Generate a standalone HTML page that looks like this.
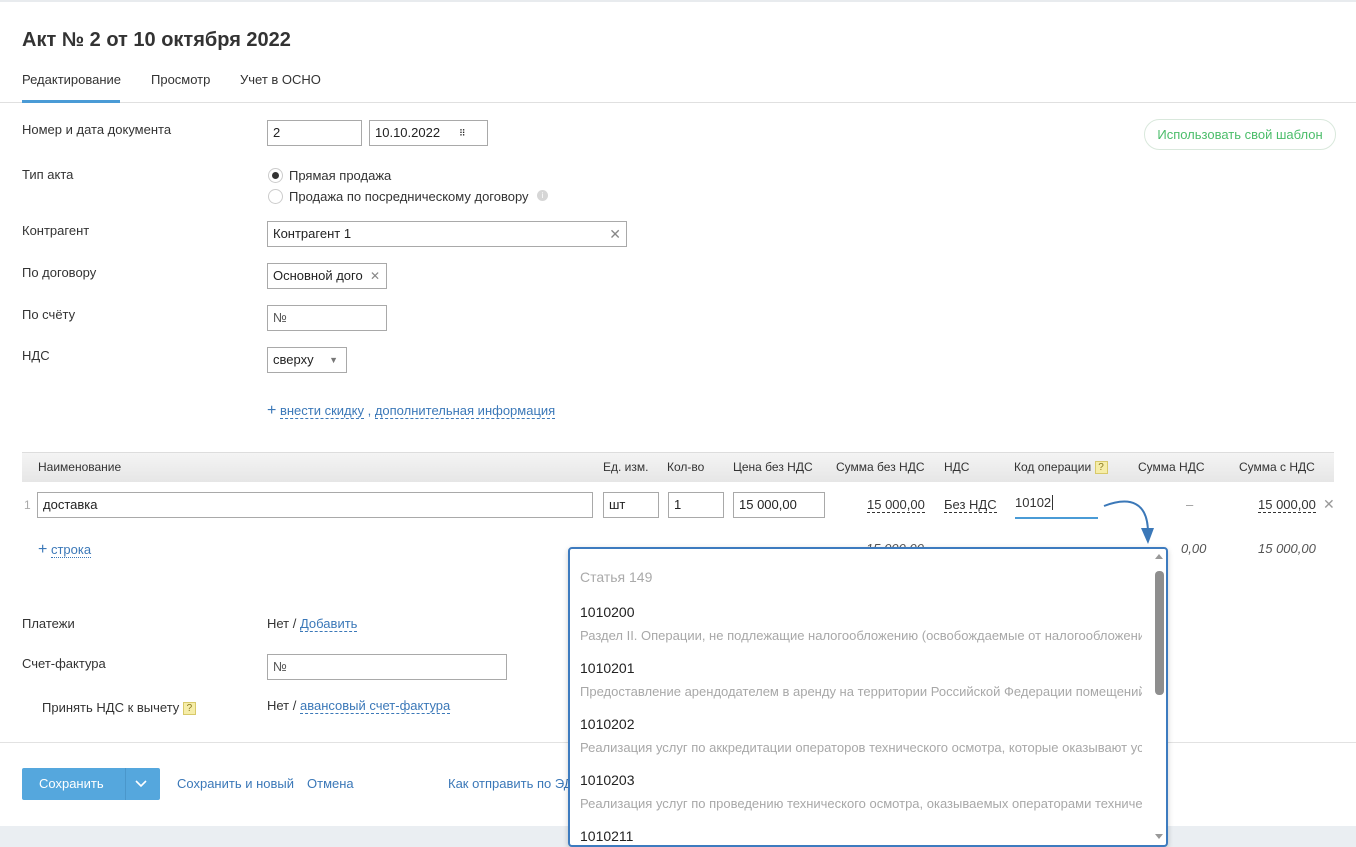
<!DOCTYPE html>
<html><head><meta charset="utf-8">
<style>
*{box-sizing:border-box;margin:0;padding:0}
body{width:1356px;height:847px;position:relative;overflow:hidden;background:#fff;font-family:"Liberation Sans",sans-serif;font-size:13px;color:#333}
.a{position:absolute;white-space:nowrap}
.inp{position:absolute;border:1px solid #a9a9a9;background:#fff;height:26px;padding:0 5px;line-height:24px;font-size:13px;color:#222;white-space:nowrap;overflow:hidden}
.lnk{color:#3b78b8;border-bottom:1px dashed #3b78b8}
.dash{border-bottom:1px dashed #333}
.th{position:absolute;top:460px;font-size:12px;color:#333;white-space:nowrap}
.q{display:inline-block;width:13px;height:13px;background:#f6eda8;border:1px solid #d8c96a;font-size:10px;line-height:11px;text-align:center;color:#8a7a20;vertical-align:1px}
.dd .n{position:absolute;left:10px;font-size:14px;color:#222}
.dd .d{position:absolute;left:10px;font-size:13px;color:#a8a8a8;white-space:nowrap;width:562px;overflow:hidden}
</style></head><body>
<div class="a" style="left:0;top:0;width:1356px;height:2px;background:#e8ebee"></div>
<div class="a" style="left:22px;top:29px;font-size:20px;font-weight:bold;color:#333">Акт № 2 от 10 октября 2022</div>
<div class="a" style="left:22px;top:72px;color:#333">Редактирование</div>
<div class="a" style="left:151px;top:72px;color:#333">Просмотр</div>
<div class="a" style="left:240px;top:72px;color:#333">Учет в ОСНО</div>
<div class="a" style="left:0;top:102px;width:1356px;height:1px;background:#e0e0e0"></div>
<div class="a" style="left:22px;top:100px;width:98px;height:3px;background:#4a9bd6"></div>

<div class="a" style="left:22px;top:122px">Номер и дата документа</div>
<div class="inp" style="left:267px;top:120px;width:95px">2</div>
<div class="inp" style="left:369px;top:120px;width:119px">10.10.2022<span style="position:absolute;left:89px;top:0;font-size:9px;letter-spacing:-1px">⠿</span></div>
<div class="a" style="left:1144px;top:119px;width:192px;height:31px;border:1px solid #d9e8dc;border-radius:16px;color:#4bbd6a;text-align:center;line-height:29px">Использовать свой шаблон</div>

<div class="a" style="left:22px;top:167px">Тип акта</div>
<div class="a" style="left:268px;top:168px;width:15px;height:15px;border:1px solid #ccc;border-radius:50%"><div style="position:absolute;left:3px;top:3px;width:7px;height:7px;border-radius:50%;background:#333"></div></div>
<div class="a" style="left:289px;top:168px">Прямая продажа</div>
<div class="a" style="left:268px;top:189px;width:15px;height:15px;border:1px solid #ccc;border-radius:50%"></div>
<div class="a" style="left:289px;top:189px">Продажа по посредническому договору</div>
<div class="a" style="left:537px;top:190px;width:11px;height:11px;border-radius:50%;background:#d6d6d6;color:#fff;font-size:8px;text-align:center;line-height:11px">i</div>

<div class="a" style="left:22px;top:223px">Контрагент</div>
<div class="inp" style="left:267px;top:221px;width:360px">Контрагент 1<span style="position:absolute;right:5px;color:#888;font-size:14px">✕</span></div>
<div class="a" style="left:22px;top:265px">По договору</div>
<div class="inp" style="left:267px;top:263px;width:120px">Основной дого<span style="position:absolute;right:6px;color:#888;font-size:12px">✕</span></div>
<div class="a" style="left:22px;top:307px">По счёту</div>
<div class="inp" style="left:267px;top:305px;width:120px;color:#555">№</div>
<div class="a" style="left:22px;top:348px">НДС</div>
<div class="inp" style="left:267px;top:347px;width:80px">сверху<span style="position:absolute;right:8px;top:0;color:#777;font-size:9px">▼</span></div>
<div class="a" style="left:267px;top:402px;color:#3b78b8"><span style="font-size:16px">+</span> <span class="lnk">внести скидку</span> , <span class="lnk">дополнительная информация</span></div>

<div class="a" style="left:22px;top:452px;width:1312px;height:30px;background:linear-gradient(#f4f4f4,#e6e6e6);border-top:1px solid #ddd"></div>
<div class="th" style="left:38px">Наименование</div>
<div class="th" style="left:603px">Ед. изм.</div>
<div class="th" style="left:667px">Кол-во</div>
<div class="th" style="left:733px">Цена без НДС</div>
<div class="th" style="left:836px">Сумма без НДС</div>
<div class="th" style="left:944px">НДС</div>
<div class="th" style="left:1014px">Код операции <span class="q">?</span></div>
<div class="th" style="left:1138px">Сумма НДС</div>
<div class="th" style="left:1239px">Сумма с НДС</div>

<div class="a" style="left:24px;top:498px;color:#aaa;font-size:12px">1</div>
<div class="inp" style="left:37px;top:492px;width:556px">доставка</div>
<div class="inp" style="left:603px;top:492px;width:56px">шт</div>
<div class="inp" style="left:668px;top:492px;width:56px">1</div>
<div class="inp" style="left:733px;top:492px;width:92px">15 000,00</div>
<div class="a dash" style="left:867px;top:497px">15 000,00</div>
<div class="a dash" style="left:944px;top:497px">Без НДС</div>
<div class="a" style="left:1015px;top:495px;width:83px;height:24px;border-bottom:2px solid #4a9bd6;font-size:13px">10102<span style="border-left:1px solid #333;margin-left:1px"></span></div>
<div class="a" style="left:1186px;top:497px;color:#999">–</div>
<div class="a dash" style="left:1258px;top:497px">15 000,00</div>
<div class="a" style="left:1323px;top:496px;color:#999;font-size:14px">✕</div>
<svg class="a" style="left:1100px;top:498px" width="60" height="50"><path d="M4 8 C30 -2 48 4 48 35" fill="none" stroke="#3b78b8" stroke-width="2"/><path d="M41 30 L48 46 L54 30 Z" fill="#3b78b8"/></svg>

<div class="a" style="left:38px;top:541px;color:#3b78b8"><span style="font-size:16px">+</span> <span style="border-bottom:1px dotted #3b78b8">строка</span></div>
<div class="a" style="left:866px;top:541px;font-style:italic;color:#555">15 000,00</div>
<div class="a" style="left:1181px;top:541px;font-style:italic;color:#555">0,00</div>
<div class="a" style="left:1258px;top:541px;font-style:italic;color:#555">15 000,00</div>

<div class="a" style="left:22px;top:616px">Платежи</div>
<div class="a" style="left:267px;top:616px">Нет / <span class="lnk">Добавить</span></div>
<div class="a" style="left:22px;top:656px">Счет-фактура</div>
<div class="inp" style="left:267px;top:654px;width:240px;color:#555">№</div>
<div class="a" style="left:42px;top:700px">Принять НДС к вычету <span class="q">?</span></div>
<div class="a" style="left:267px;top:698px">Нет / <span class="lnk">авансовый счет-фактура</span></div>

<div class="a" style="left:0;top:742px;width:1356px;height:1px;background:#e2e2e2"></div>
<div class="a" style="left:22px;top:768px;width:138px;height:32px;background:#55a7dd;border-radius:2px;color:#fff;line-height:32px"><span style="margin-left:17px">Сохранить</span><span style="position:absolute;left:103px;top:0;height:32px;border-left:1px solid #4a97cb"></span><svg style="position:absolute;left:113px;top:12px" width="12" height="8"><path d="M1 1 L6 6 L11 1" fill="none" stroke="#fff" stroke-width="1.6"/></svg></div>
<div class="a" style="left:177px;top:776px;color:#3b78b8">Сохранить и новый</div>
<div class="a" style="left:307px;top:776px;color:#3b78b8">Отмена</div>
<div class="a" style="left:448px;top:776px;color:#3b78b8">Как отправить по ЭДО</div>
<div class="a" style="left:0;top:826px;width:1356px;height:21px;background:#eaeef2"></div>

<div class="a dd" style="left:568px;top:547px;width:600px;height:300px;border:2px solid #3d7bbf;border-radius:4px;background:#fff;overflow:hidden;box-shadow:0 2px 6px rgba(0,0,0,.2)">
<div class="a" style="left:10px;top:20px;font-size:14px;color:#aaa">Статья 149</div>
<div class="n" style="top:55px">1010200</div>
<div class="d" style="top:79px">Раздел II. Операции, не подлежащие налогообложению (освобождаемые от налогообложения)</div>
<div class="n" style="top:111px">1010201</div>
<div class="d" style="top:135px">Предоставление арендодателем в аренду на территории Российской Федерации помещений</div>
<div class="n" style="top:167px">1010202</div>
<div class="d" style="top:191px">Реализация услуг по аккредитации операторов технического осмотра, которые оказывают услуги</div>
<div class="n" style="top:223px">1010203</div>
<div class="d" style="top:247px">Реализация услуг по проведению технического осмотра, оказываемых операторами технического</div>
<div class="n" style="top:279px">1010211</div>
<div class="a" style="left:585px;top:5px;width:0;height:0;border-left:4px solid transparent;border-right:4px solid transparent;border-bottom:5px solid #999"></div>
<div class="a" style="left:585px;top:22px;width:9px;height:124px;background:#8e8e8e;border-radius:4px"></div>
<div class="a" style="left:585px;top:285px;width:0;height:0;border-left:4px solid transparent;border-right:4px solid transparent;border-top:5px solid #999"></div>
</div>
</body></html>
